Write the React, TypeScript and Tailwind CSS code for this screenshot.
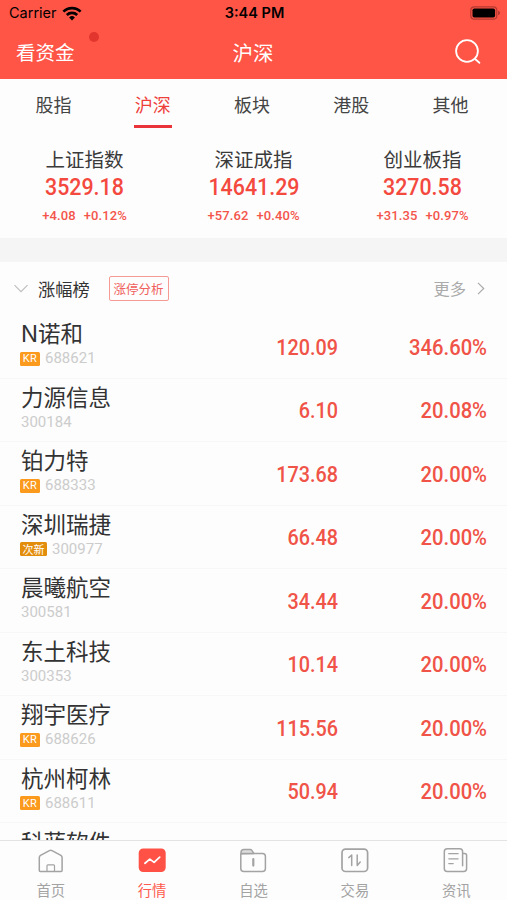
import type React from "react";
import clsx from "clsx";

interface IndexQuote {
  name: string;
  value: string;
  change: string;
  percent: string;
}

interface Stock {
  name: string;
  code: string;
  tag?: "KR" | "次新";
  price: string;
  percent: string;
}

interface TabItem {
  label: string;
  icon: React.ReactNode;
  active?: boolean;
}

const categories = ["股指", "沪深", "板块", "港股", "其他"];

const indexes: IndexQuote[] = [
  { name: "上证指数", value: "3529.18", change: "+4.08", percent: "+0.12%" },
  { name: "深证成指", value: "14641.29", change: "+57.62", percent: "+0.40%" },
  { name: "创业板指", value: "3270.58", change: "+31.35", percent: "+0.97%" },
];

const stocks: Stock[] = [
  { name: "N诺和", code: "688621", tag: "KR", price: "120.09", percent: "346.60%" },
  { name: "力源信息", code: "300184", price: "6.10", percent: "20.08%" },
  { name: "铂力特", code: "688333", tag: "KR", price: "173.68", percent: "20.00%" },
  { name: "深圳瑞捷", code: "300977", tag: "次新", price: "66.48", percent: "20.00%" },
  { name: "晨曦航空", code: "300581", price: "34.44", percent: "20.00%" },
  { name: "东土科技", code: "300353", price: "10.14", percent: "20.00%" },
  { name: "翔宇医疗", code: "688626", tag: "KR", price: "115.56", percent: "20.00%" },
  { name: "杭州柯林", code: "688611", tag: "KR", price: "50.94", percent: "20.00%" },
];

function TabIcon({ children }: { children: React.ReactNode }) {
  return (
    <svg
      width="30"
      height="26"
      viewBox="0 0 30 26"
      fill="none"
      stroke="#a3a3a3"
      strokeWidth="1.5"
      strokeLinecap="round"
      strokeLinejoin="round"
    >
      {children}
    </svg>
  );
}

const tabs: TabItem[] = [
  {
    label: "首页",
    icon: (
      <TabIcon>
        <path d="M3.3 10.4c0-1 .4-1.6 1.2-2.1l8.9-4.7c.9-.5 1.7-.5 2.6 0l8.9 4.7c.8.5 1.2 1.1 1.2 2.1v13.2c0 .6-.3.9-.9.9h-21c-.6 0-.9-.3-.9-.9z" />
        <path d="M11 24.3v-5.6c0-.6.3-.9.9-.9h5.7c.6 0 .9.3.9.9v5.6" strokeWidth="1.2" />
      </TabIcon>
    ),
  },
  {
    label: "行情",
    active: true,
    icon: (
      <TabIcon>
        <rect x="1.7" y="1.4" width="27" height="23.6" rx="4.5" fill="#ff5145" stroke="none" />
        <path d="m8 16.3 4.8-4.2 4.3 3.3 5.6-5.2" stroke="#fff" strokeWidth="1.8" />
      </TabIcon>
    ),
  },
  {
    label: "自选",
    icon: (
      <TabIcon>
        <path d="M3 6.8V5.2A2.6 2.6 0 0 1 5.6 2.6h6.7c.7 0 1.1.2 1.5.8l2 3z" fill="#ddd" />
        <path d="M2.8 7V21.5a3 3 0 0 0 3 3h18.6a3 3 0 0 0 3-3V9.4a3 3 0 0 0-3-3H3.6" />
        <path d="M15.3 12v6.6" strokeWidth="2.2" />
      </TabIcon>
    ),
  },
  {
    label: "交易",
    icon: (
      <TabIcon>
        <rect x="2" y="2.2" width="25.6" height="22.3" rx="3.5" strokeWidth="1.7" />
        <path d="m8.8 10.6 2.9-2.6v10.6M17.2 8v10.6l3-3.6" strokeWidth="1.5" />
      </TabIcon>
    ),
  },
  {
    label: "资讯",
    icon: (
      <TabIcon>
        <path d="M21.6 18.8V4.8c0-2-.9-3-2.9-3H6.3c-2 0-3 1-3 3v16.6c0 2 1 3 3 3h16.3c2 0 3-1 3-3V8.6c0-1.2-.8-2-2-2h-2" />
        <path d="M7.8 6.7h9.3M7.8 11.8h9.3M7.8 16.6h4.4" strokeWidth="1.3" />
      </TabIcon>
    ),
  },
];

function StatusBar() {
  return (
    <div className="grid h-[27px] grid-cols-3 items-center pr-[7px] pl-[9px] font-['Inter',sans-serif] text-black">
      <div className="flex items-center gap-[5px]">
        <span className="text-[14.5px] leading-none">Carrier</span>
        <svg width="20" height="15" viewBox="0 0 20 15" fill="none" stroke="#000" strokeWidth="2.7">
          <path d="M1.4 5.6a12.3 12.3 0 0 1 17.2 0" />
          <path d="M4.8 9a7.5 7.5 0 0 1 10.4 0" />
          <path d="m10 14.5-2.9-3.1a4.2 4.2 0 0 1 5.8 0z" fill="#000" stroke="none" />
        </svg>
      </div>
      <span className="text-center text-[14.5px] leading-none font-semibold whitespace-nowrap">3:44 PM</span>
      <svg className="mr-[-1px] mb-px justify-self-end" width="31" height="14" viewBox="0 0 31 14">
        <rect x=".8" y=".8" width="26" height="12.4" rx="3.5" fill="none" stroke="#b43a31" strokeWidth="1.2" />
        <rect x="2.5" y="2.5" width="22.6" height="9" rx="1.8" />
        <path d="M28.2 4.8c2.2.6 2.2 3.8 0 4.4z" fill="#a8352d" />
      </svg>
    </div>
  );
}

function Header() {
  return (
    <header className="h-[79px] shrink-0 bg-[#ff5547] text-white">
      <StatusBar />
      <div className="grid h-[50px] grid-cols-3 items-center pr-[26px] pl-4 text-[19.5px]">
        <div className="relative w-fit leading-none">
          看资金
          <span className="absolute -top-[10px] left-[73px] size-[10px] rounded-full bg-[#e2352d]" />
        </div>
        <span className="pl-[9px] text-center text-[20.5px] leading-none">沪深</span>
        <svg
          className="mb-[2px] justify-self-end"
          width="27"
          height="27"
          viewBox="0 0 27 27"
          fill="none"
          stroke="#fff"
          strokeWidth="1.8"
          strokeLinecap="round"
        >
          <circle cx="13" cy="13" r="10.9" />
          <path d="m20.8 20.8 4.6 4" />
        </svg>
      </div>
    </header>
  );
}

function CategoryTabs() {
  return (
    <nav className="grid h-[49px] shrink-0 grid-cols-5 pr-[7px] pl-[4px] text-lg text-[#444]">
      {categories.map((label) => {
        const active = label === "沪深";
        return (
          <div key={label} className="flex flex-col items-center">
            <span className={clsx("mt-[11px] leading-[28px]", active && "text-[#ee3f3b]")}>{label}</span>
            {active && <span className="mt-[7px] h-[2.5px] w-[38px] bg-[#e9353a]" />}
          </div>
        );
      })}
    </nav>
  );
}

function IndexCard({ name, value, change, percent }: IndexQuote) {
  return (
    <div className="flex flex-col items-center">
      <span className="mt-[16px] text-[19.5px] leading-[29px] text-[#3a3a3a]">{name}</span>
      <span className="mt-px scale-x-[0.93] font-['Roboto',sans-serif] text-[23px] leading-[28px] font-medium text-[#f4493e]">
        {value}
      </span>
      <div className="mt-[6px] flex gap-2 font-['Roboto',sans-serif] text-[13px] leading-[16px] font-medium tracking-[0.1px] text-[#f4554b]">
        <span>{change}</span>
        <span>{percent}</span>
      </div>
    </div>
  );
}

function StockRow({ name, code, tag, price, percent }: Stock) {
  return (
    <div className="flex h-[63.5px] shrink-0 border-b border-[#f7f7f7] pr-5 pl-[21px]">
      <div className="flex-1">
        <div className="mt-[3px] font-['Inter','Noto_Sans_CJK_SC',sans-serif] text-[22.5px] leading-[31px] text-[#333]">
          {name}
        </div>
        <div className="-ml-px flex h-[18px] items-center gap-[5px] font-['Roboto',sans-serif] text-[15px] leading-[18px] text-[#ccc]">
          {tag && (
            <span
              className={clsx(
                "mt-px flex h-[14px] items-center justify-center rounded-[1.5px] leading-none text-white",
                tag === "KR"
                  ? "w-5 bg-[#fb9a1c] text-[11px] tracking-[0.5px]"
                  : "w-[27px] bg-[#e38d0c] font-['Noto_Sans_CJK_SC',sans-serif] text-[11px]"
              )}
            >
              {tag}
            </span>
          )}
          <span className={clsx(!tag && "ml-px")}>{code}</span>
        </div>
      </div>
      <span className="mt-[18.5px] w-[100px] origin-right scale-x-[0.92] text-right font-['Roboto',sans-serif] text-[21.5px] leading-[28px] font-medium text-[#f05347]">
        {price}
      </span>
      <span className="mt-[18.5px] w-[149px] origin-right scale-x-[0.94] text-right font-['Roboto',sans-serif] text-[21.5px] leading-[28px] font-medium text-[#f05347]">
        {percent}
      </span>
    </div>
  );
}

function RankingHeader() {
  return (
    <div className="flex h-[53px] shrink-0 items-center pr-[22px] pl-[14px]">
      <svg width="14" height="9" viewBox="0 0 14 9" fill="none" stroke="#bdbdbd" strokeWidth="1.1">
        <path d="m.5 1.2 6.5 6.5 6.5-6.5" />
      </svg>
      <span className="ml-[10px] text-[17.2px] text-[#333]">涨幅榜</span>
      <span className="ml-[19px] flex h-[25px] w-[60px] items-center justify-center rounded-[2px] border border-[#f69a96] pt-px text-[12.5px] text-[#f0605c]">
        涨停分析
      </span>
      <span className="ml-auto text-[16.3px] text-[#aaa]">更多</span>
      <svg className="ml-[11px]" width="8" height="13" viewBox="0 0 8 13" fill="none" stroke="#aaa" strokeWidth="1.2">
        <path d="m1 .8 5.7 5.7L1 12.2" />
      </svg>
    </div>
  );
}

function BottomTabs() {
  return (
    <nav className="grid h-[60px] shrink-0 grid-cols-5 border-t border-[#e3e3e3] bg-[#fdfdfd]">
      {tabs.map(({ label, icon, active }) => (
        <div key={label} className="flex flex-col items-center pt-[6px]">
          {icon}
          <span
            className={clsx("mt-[6px] text-[14.3px] leading-[21px]", active ? "text-[#ff5a4d]" : "text-[#a3a3a3]")}
          >
            {label}
          </span>
        </div>
      ))}
    </nav>
  );
}

export default function App() {
  return (
    <div className="flex h-[900px] w-[507px] flex-col overflow-hidden bg-[#fdfdfd] font-['Noto_Sans_CJK_SC',sans-serif]">
      <Header />
      <CategoryTabs />
      <section className="grid h-[110px] shrink-0 grid-cols-3">
        {indexes.map((item) => (
          <IndexCard key={item.name} {...item} />
        ))}
      </section>
      <div className="h-6 shrink-0 bg-[#f5f5f5]" />
      <RankingHeader />
      <main className="flex min-h-0 flex-1 flex-col overflow-hidden">
        {stocks.map((stock) => (
          <StockRow key={stock.code} {...stock} />
        ))}
        {/* next row, only its top edge shows above the tab bar */}
        <div className="mt-[3px] shrink-0 pl-[21px] text-[22.5px] leading-[31px] text-[#333]">科蓝软件</div>
      </main>
      <BottomTabs />
    </div>
  );
}
